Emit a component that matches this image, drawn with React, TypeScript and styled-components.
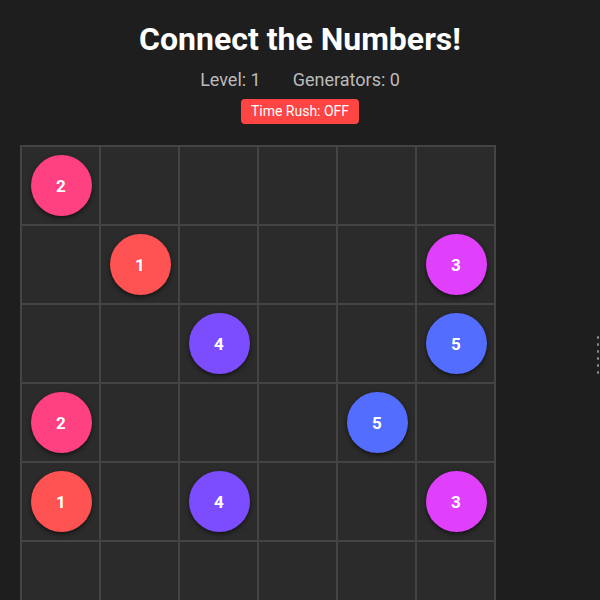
import React from "react";
import styled, { createGlobalStyle } from "styled-components";

const GlobalStyle = createGlobalStyle`
  html, body {
    margin: 0;
    padding: 0;
    background: #1e1e1e;
    overflow: hidden;
  }
  body {
    font-family: Roboto, "Liberation Sans", Arial, sans-serif;
    color: #ffffff;
  }
`;

const Page = styled.div`
  position: relative;
  width: 600px;
  height: 600px;
  box-sizing: border-box;
  padding: 20px 20px 0 20px;
  background: #1e1e1e;
  overflow: hidden;
`;

const Header = styled.header`
  display: flex;
  flex-direction: column;
  align-items: center;
  width: 560px;
`;

const Title = styled.h1`
  margin: 0;
  font-size: 32px;
  line-height: 38px;
  font-weight: 700;
  color: #ffffff;
`;

const Stats = styled.div`
  display: flex;
  gap: 32px;
  margin-top: 11px;
  font-size: 18px;
  line-height: 21px;
  color: #bbbbbb;
`;

const RushButton = styled.button<{ $on: boolean }>`
  margin-top: 9px;
  padding: 4px 10px;
  border: none;
  border-radius: 4px;
  background: ${(p) => (p.$on ? "#4caf50" : "#ff4444")};
  color: #ffffff;
  font-family: Roboto, "Liberation Sans", Arial, sans-serif;
  font-size: 14px;
  line-height: 17px;
  cursor: pointer;
`;

const Board = styled.div`
  margin-top: 21px;
  display: grid;
  grid-template-columns: repeat(6, 77px);
  grid-auto-rows: 77px;
  gap: 2px;
  padding: 2px;
  width: max-content;
  background: #444444;
`;

const Cell = styled.div`
  display: flex;
  align-items: center;
  justify-content: center;
  background: #2b2b2b;
`;

const Node = styled.div<{ $color: string }>`
  width: 61px;
  height: 61px;
  margin-left: 1px;
  border-radius: 50%;
  background: ${(p) => p.$color};
  box-shadow: 0 2px 4px rgba(0, 0, 0, 0.55);
  display: flex;
  align-items: center;
  justify-content: center;
  font-size: 17px;
  font-weight: 700;
  color: #ffffff;
`;

const EdgeDots = styled.div`
  position: absolute;
  right: 1px;
  top: 336px;
  display: flex;
  flex-direction: column;
  gap: 4px;
`;

const Dot = styled.span`
  width: 2px;
  height: 3px;
  background: #8a8a8a;
  border-radius: 1px;
`;

const COLORS: Record<number, string> = {
  1: "#ff5252",
  2: "#ff4081",
  3: "#e040fb",
  4: "#7c4dff",
  5: "#536dfe",
};

const BOARD: number[][] = [
  [2, 0, 0, 0, 0, 0],
  [0, 1, 0, 0, 0, 3],
  [0, 0, 4, 0, 0, 5],
  [2, 0, 0, 0, 5, 0],
  [1, 0, 4, 0, 0, 3],
  [0, 0, 0, 0, 0, 0],
];

export default function App() {
  return (
    <>
      <GlobalStyle />
      <Page>
        <Header>
          <Title>Connect the Numbers!</Title>
          <Stats>
            <span>Level: 1</span>
            <span>Generators: 0</span>
          </Stats>
          <RushButton $on={false}>Time Rush: OFF</RushButton>
        </Header>
        <Board>
          {BOARD.flatMap((row, r) =>
            row.map((v, c) => (
              <Cell key={`${r}-${c}`}>
                {v > 0 && <Node $color={COLORS[v]}>{v}</Node>}
              </Cell>
            ))
          )}
        </Board>
        <EdgeDots>
          {Array.from({ length: 6 }).map((_, i) => (
            <Dot key={i} />
          ))}
        </EdgeDots>
      </Page>
    </>
  );
}
